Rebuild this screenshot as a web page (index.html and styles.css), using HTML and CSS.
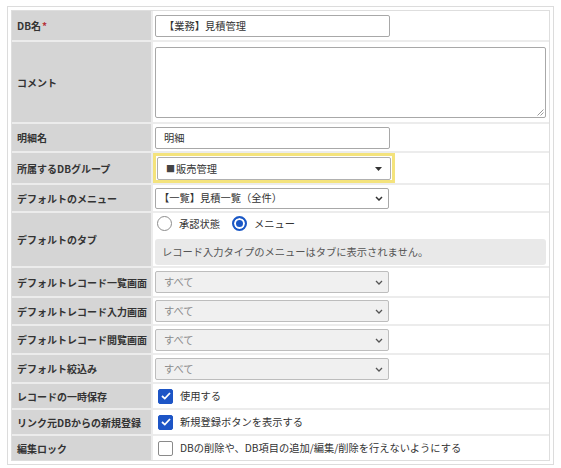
FILE: index.html
```html
<!DOCTYPE html>
<html lang="ja">
<head>
<meta charset="utf-8">
<title>DB設定</title>
<link rel="stylesheet" href="styles.css">
</head>
<body>
<div class="panel">
  <table class="form">
    <tr class="row-name">
      <th>DB名<span class="req">*</span></th>
      <td><div class="field">【業務】見積管理</div></td>
    </tr>
    <tr class="row-area">
      <th>コメント</th>
      <td>
        <div class="area">
          <svg class="grip" width="7" height="7" viewBox="0 0 7 7"><path d="M6.5 0.5L0.5 6.5M6.5 3.5L3.5 6.5" stroke="#9a9a9a" stroke-width="1"/></svg>
        </div>
      </td>
    </tr>
    <tr class="row-detail">
      <th>明細名</th>
      <td><div class="field">明細</div></td>
    </tr>
    <tr class="row-group">
      <th>所属するDBグループ</th>
      <td class="cell-flush">
        <div class="hl">
          <div class="field select custom"><span class="sq">■</span>販売管理
            <svg class="tri" width="7" height="4" viewBox="0 0 7 4"><path d="M0 0H7L3.5 4Z" fill="#333"/></svg>
          </div>
        </div>
      </td>
    </tr>
    <tr class="row-menu">
      <th>デフォルトのメニュー</th>
      <td>
        <div class="field select short">【一覧】見積一覧（全件）
          <svg class="chev" width="8" height="5" viewBox="0 0 8 5"><path d="M1 1L4 4L7 1" fill="none" stroke="#333" stroke-width="1.5"/></svg>
        </div>
      </td>
    </tr>
    <tr class="row-tab">
      <th>デフォルトのタブ</th>
      <td>
        <div class="radios">
          <span class="radio"></span><span class="rlabel">承認状態</span>
          <span class="radio on"></span><span class="rlabel">メニュー</span>
        </div>
        <div class="note">レコード入力タイプのメニューはタブに表示されません。</div>
      </td>
    </tr>
    <tr class="row-sel-a">
      <th>デフォルトレコード一覧画面</th>
      <td>
        <div class="field select disabled">すべて
          <svg class="chev" width="8" height="5" viewBox="0 0 8 5"><path d="M1 1L4 4L7 1" fill="none" stroke="#555" stroke-width="1.3"/></svg>
        </div>
      </td>
    </tr>
    <tr class="row-sel-b">
      <th>デフォルトレコード入力画面</th>
      <td>
        <div class="field select disabled">すべて
          <svg class="chev" width="8" height="5" viewBox="0 0 8 5"><path d="M1 1L4 4L7 1" fill="none" stroke="#555" stroke-width="1.3"/></svg>
        </div>
      </td>
    </tr>
    <tr class="row-sel-c">
      <th>デフォルトレコード閲覧画面</th>
      <td>
        <div class="field select disabled">すべて
          <svg class="chev" width="8" height="5" viewBox="0 0 8 5"><path d="M1 1L4 4L7 1" fill="none" stroke="#555" stroke-width="1.3"/></svg>
        </div>
      </td>
    </tr>
    <tr class="row-sel-c">
      <th>デフォルト絞込み</th>
      <td>
        <div class="field select disabled">すべて
          <svg class="chev" width="8" height="5" viewBox="0 0 8 5"><path d="M1 1L4 4L7 1" fill="none" stroke="#555" stroke-width="1.3"/></svg>
        </div>
      </td>
    </tr>
    <tr class="row-check">
      <th>レコードの一時保存</th>
      <td>
        <label class="check-line">
          <span class="check on"><svg width="10" height="8" viewBox="0 0 10 8"><path d="M1 4L3.8 6.6L9 1" fill="none" stroke="#fff" stroke-width="1.8"/></svg></span>
          使用する
        </label>
      </td>
    </tr>
    <tr class="row-check">
      <th>リンク元DBからの新規登録</th>
      <td>
        <label class="check-line">
          <span class="check on"><svg width="10" height="8" viewBox="0 0 10 8"><path d="M1 4L3.8 6.6L9 1" fill="none" stroke="#fff" stroke-width="1.8"/></svg></span>
          新規登録ボタンを表示する
        </label>
      </td>
    </tr>
    <tr class="row-check last">
      <th>編集ロック</th>
      <td>
        <label class="check-line">
          <span class="check"></span>
          DBの削除や、DB項目の追加/編集/削除を行えないようにする
        </label>
      </td>
    </tr>
  </table>
</div>
</body>
</html>
```
FILE: styles.css
```css
html, body {
  margin: 0;
  padding: 0;
  background: #fff;
}

body {
  font-family: "Noto Sans CJK JP", "Noto Sans", sans-serif;
  color: #333;
}

.panel {
  margin: 6px 7px;
  border: 1px solid #dcdcdc;
  padding: 3px;
}

.form {
  width: 100%;
  border-collapse: separate;
  border-spacing: 0;
  border: 1px solid #dedede;
  table-layout: fixed;
}

.form th {
  width: 129px;
  padding: 0 5px;
  background: #d5d5d5;
  text-align: left;
  vertical-align: middle;
  font-size: 10px;
  font-weight: bold;
  color: #333;
  line-height: 1.3;
  white-space: nowrap;
  border-right: 2px solid #ececec;
  border-bottom: 2px solid #ececec;
}

.form td {
  padding: 0 3px 0 2px;
  vertical-align: middle;
  font-size: 10.25px;
  line-height: 1.3;
  border-bottom: 2px solid #ececec;
}

.form tr.last th,
.form tr.last td {
  border-bottom: none;
}

.row-name th { height: 29px; }
.row-area th { height: 80px; }
.row-detail th { height: 27px; }
.row-group th { height: 30px; }
.row-menu th { height: 26px; }
.row-tab th { height: 53px; }
.row-sel-a th { height: 28px; }
.row-sel-b th { height: 26px; }
.row-sel-c th { height: 27px; }
.row-check th { height: 24px; }

.req {
  color: #b5323a;
  margin-left: 1px;
}

.field {
  position: relative;
  box-sizing: border-box;
  width: 235px;
  height: 22px;
  border: 1px solid #a8a8a8;
  border-radius: 2px;
  background: #fff;
  padding: 0 8px;
  display: flex;
  align-items: center;
  color: #333;
  white-space: nowrap;
}

.field.short {
  height: 21px;
  width: 234px;
  padding-left: 3px;
}

.field.disabled {
  background: #f0f0f0;
  border-color: #bdbdbd;
  color: #8a8a8a;
  width: 234px;
}

.chev {
  position: absolute;
  right: 5px;
  top: 50%;
  margin-top: -2px;
}

.tri {
  position: absolute;
  right: 8px;
  top: 50%;
  margin-top: -2px;
}

.cell-flush {
  padding: 0;
}

.form td.cell-flush {
  padding: 0;
}

.hl {
  box-sizing: border-box;
  width: 242px;
  height: 30px;
  border: 3px solid #f4e37c;
  padding: 1px 0 0 1px;
}

.field.custom {
  width: 234px;
  height: 23px;
  border-color: #b0b0b0;
  padding-left: 8px;
}

.sq {
  font-size: 9px;
  color: #444;
  margin-right: 1px;
}

.area {
  position: relative;
  box-sizing: border-box;
  width: 391px;
  height: 71px;
  border: 1px solid #a8a8a8;
  border-radius: 2px;
  background: #fff;
  margin-top: 1px;
}

.grip {
  position: absolute;
  right: 1px;
  bottom: 1px;
}

.radios {
  display: flex;
  align-items: center;
  height: 16px;
  padding-left: 2px;
  margin-top: 1px;
}

.radio {
  box-sizing: border-box;
  width: 15px;
  height: 15px;
  border-radius: 50%;
  border: 1px solid #8d8d8d;
  background: #fff;
  flex: none;
}

.radio.on {
  border: 2px solid #1b58c6;
  box-shadow: inset 0 0 0 2px #fff;
  background: #1b58c6;
}

.rlabel {
  margin-left: 7px;
  margin-right: 12px;
  color: #333;
}

.note {
  box-sizing: border-box;
  width: 391px;
  height: 26px;
  margin-top: 7px;
  border-radius: 3px;
  background: #e9e9e9;
  color: #555;
  padding-left: 7px;
  display: flex;
  align-items: center;
}

.check-line {
  display: flex;
  align-items: center;
  padding-left: 3px;
  color: #333;
}

.check {
  box-sizing: border-box;
  width: 15px;
  height: 15px;
  border: 1px solid #8a8a8a;
  border-radius: 2px;
  background: #fff;
  margin-right: 7px;
  display: flex;
  align-items: center;
  justify-content: center;
  flex: none;
}

.check.on {
  background: #1d55c6;
  border-color: #1d55c6;
}
```
